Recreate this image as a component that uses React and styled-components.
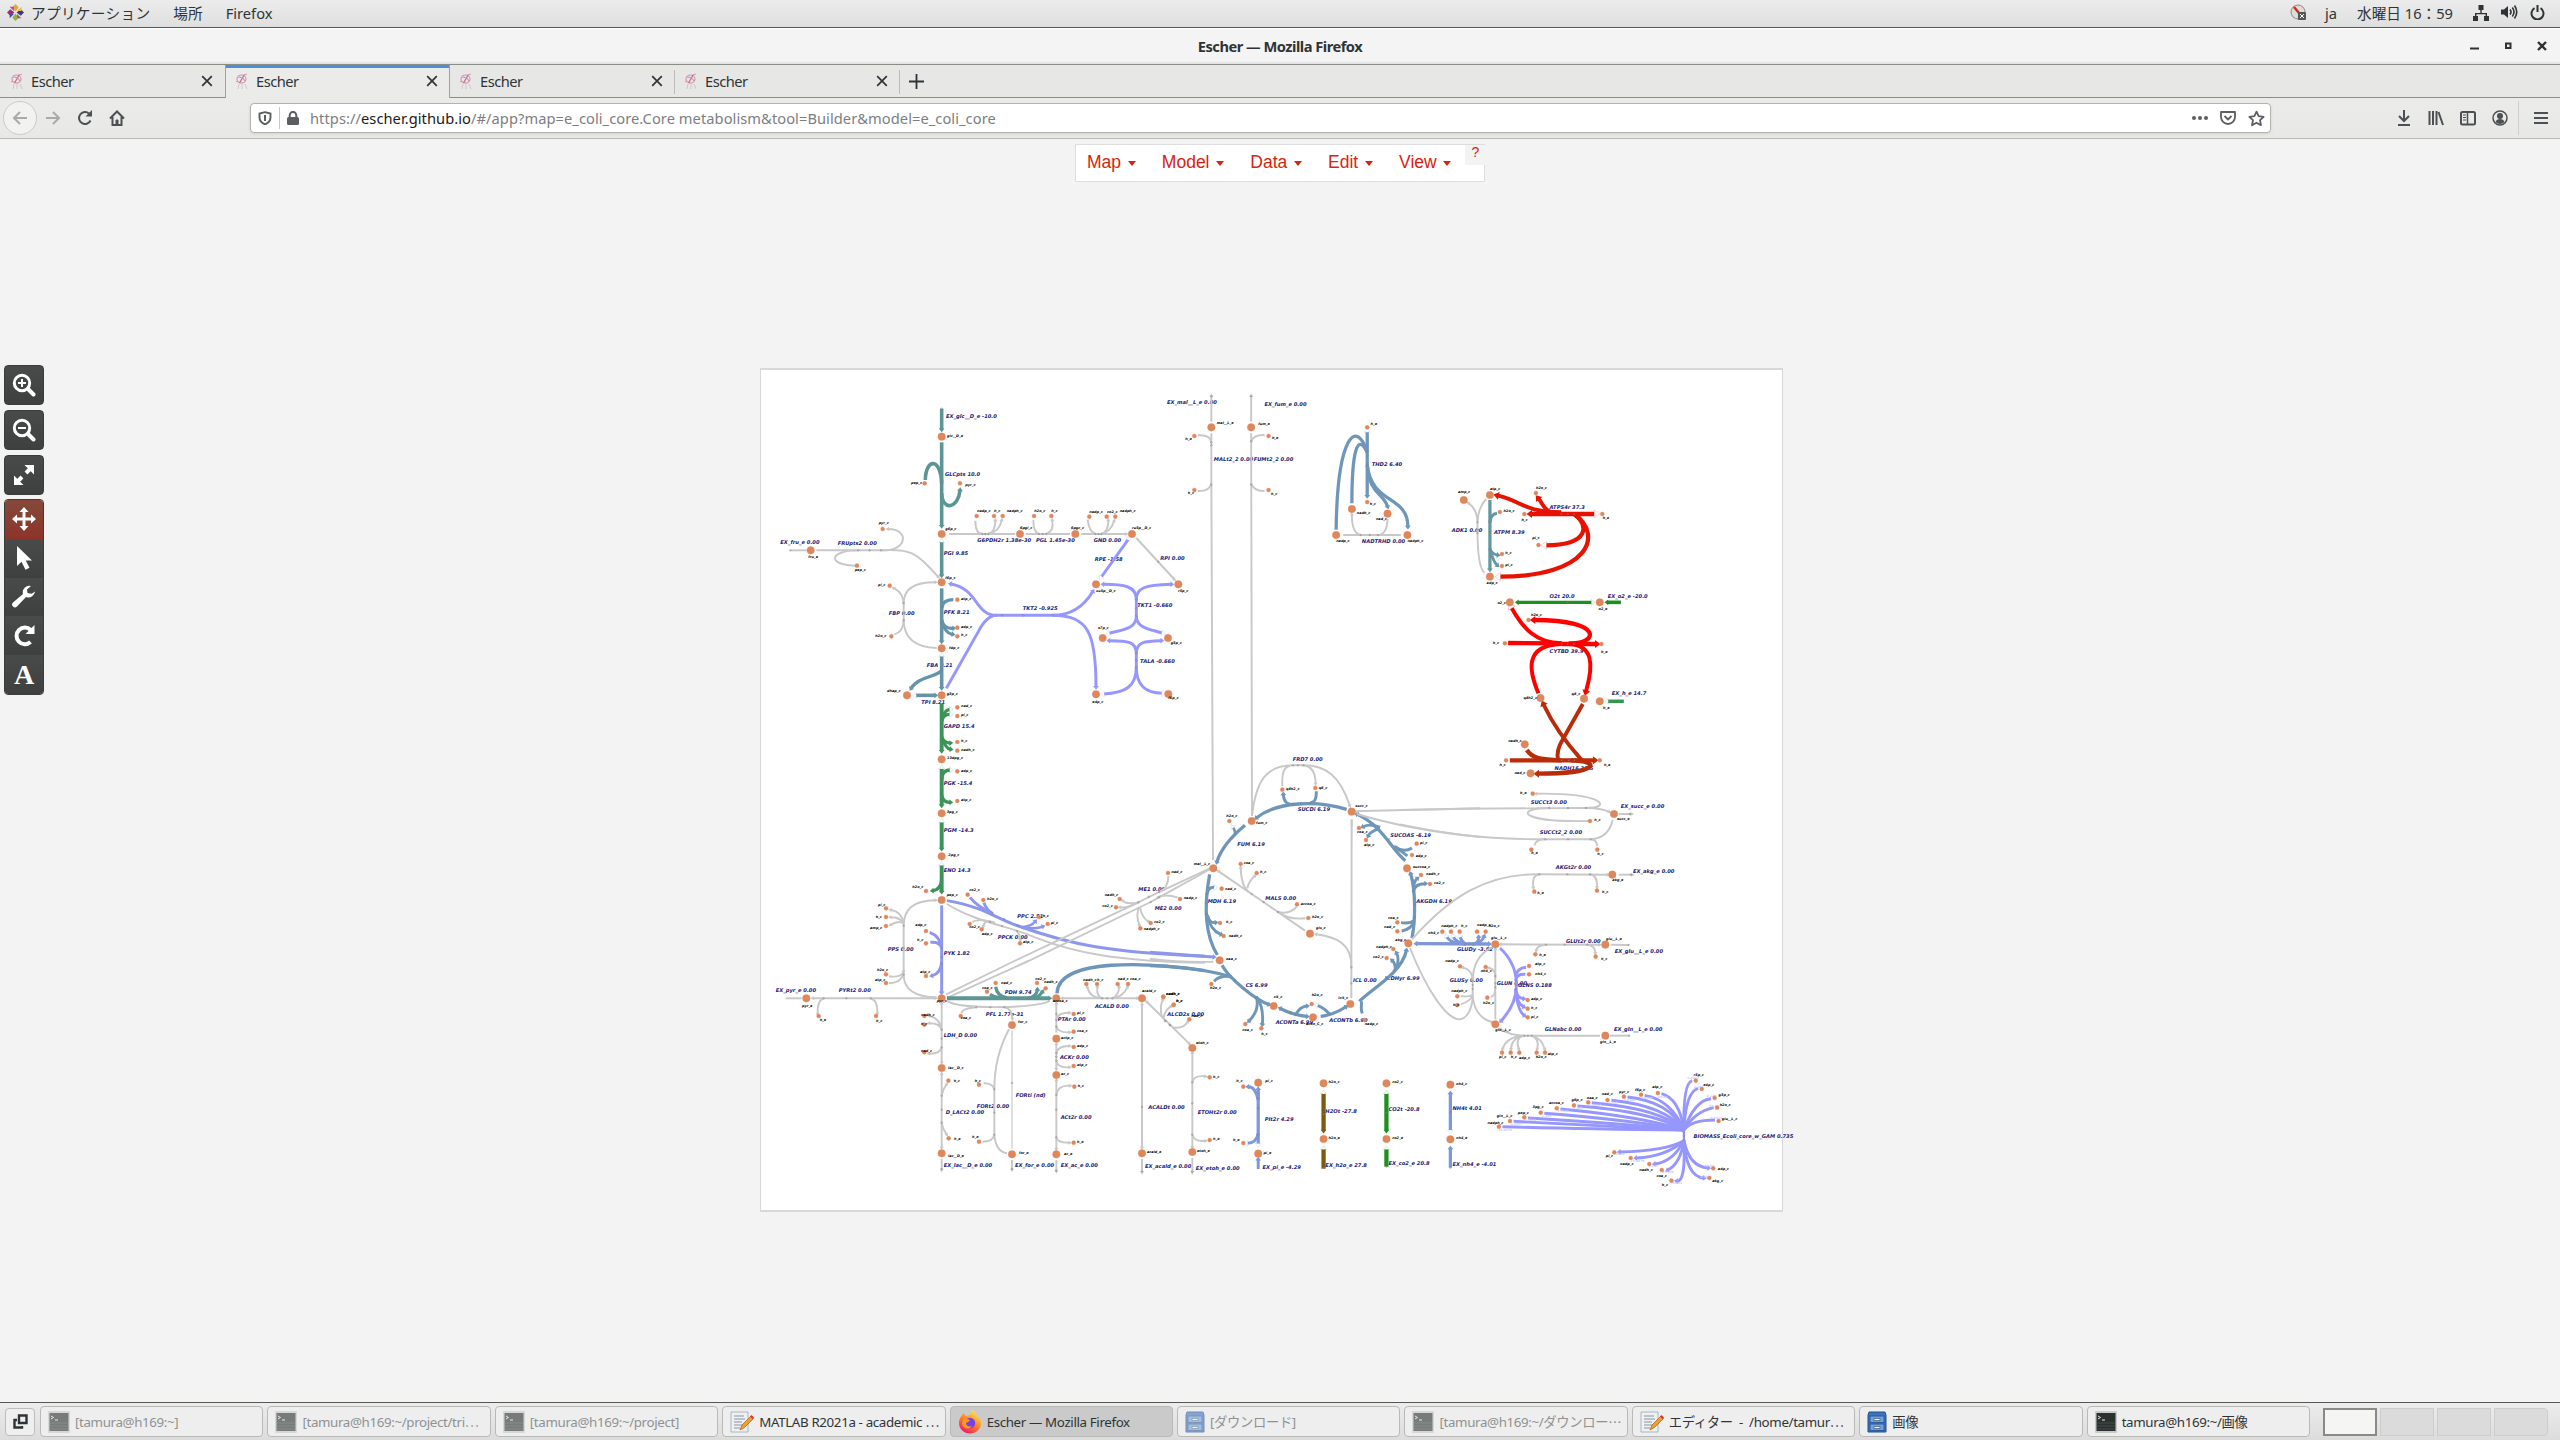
import React from 'react';
import styled, { createGlobalStyle, css } from 'styled-components';

const ui = '"Noto Sans", "Noto Sans CJK JP", sans-serif';

const Global = createGlobalStyle`
  html, body { margin: 0; padding: 0; }
  body { width: 2560px; height: 1440px; overflow: hidden; background: #f3f3f3; font-family: ${ui}; }
  * { box-sizing: border-box; }
  svg { display: block; flex: none; }
`;

/* ---------- desktop chrome ---------- */
const Desktop = styled.div`display: flex; flex-direction: column; width: 2560px; height: 1440px; color: #2e3436;`;
const TopPanel = styled.header`
  display: flex; align-items: center; height: 28px; padding: 0 15px 2px 7px;
  background: linear-gradient(#ececec, #dfdfdf); border-bottom: 1px solid #555753; font-size: 14.67px; white-space: nowrap;
`;
const PanelItem = styled.span`margin-left: ${p => p.$gap || 0}px; letter-spacing: ${p => p.$ls || 0}px;`;
const Spacer = styled.div`flex: 1;`;
const PanelIcon = styled.span`margin-left: ${p => p.$gap || 0}px;`;
const TitleBar = styled.div`
  display: grid; grid-template-columns: 1fr auto 1fr; align-items: center; height: 37px; padding-bottom: 1px;
  background: linear-gradient(#fff 0 1px, #f4f4f4 1px 33px, #dedede 36px); border-bottom: 1px solid #8b8d87;
`;
const Title = styled.div`font-size: 14.67px; font-weight: 700; letter-spacing: -.5px; grid-column: 2; white-space: nowrap;`;
const WindowButtons = styled.div`display: flex; justify-content: flex-end; align-items: center; gap: 21px; padding-right: 13px;`;
const TabStrip = styled.div`display: flex; height: 33px; background: #e7e7e5; box-shadow: inset 0 -1px #8b8d87;`;
const Tab = styled.div`
  display: flex; align-items: center; width: 225px; padding: 0 12px 1px 10px; font-size: 14.67px;
  ${p => p.$active && css`
    background: #ebebe9; border: solid #a0a19c; border-width: 0 1px; box-shadow: inset 0 3px #4a90d9; padding: 0 11px 1px 9px;
  `}
  ${p => p.$line && css`background: linear-gradient(#bdbdb9, #bdbdb9) right 5px / 1px 24px no-repeat; padding-left: 9px;`}
`;
const TabLabel = styled.span`flex: 1; margin-left: 7px; letter-spacing: -.5px;`;
const NewTab = styled.div`display: flex; align-items: center; margin-left: 9px;`;
const NavBar = styled.div`
  display: flex; align-items: center; height: 41px; padding: 0 11px 0 3px;
  background: linear-gradient(#ebebe9, #e8e8e6); border-bottom: 1px solid #b8b8b4; color: #4c5052;
`;
const BackButton = styled.div`
  display: grid; place-items: center; width: 34px; height: 34px; border: 1px solid #cbcbc8; border-radius: 50%; background: #f2f2f1;
`;
const NavIcon = styled.div`display: grid; place-items: center; width: ${p => p.$w || 32}px; height: 32px;`;
const UrlBar = styled.div`
  display: flex; align-items: center; width: 2021px; height: 30px; margin-left: 117px; padding: 0 0 0 4px;
  background: #fff; border: 1px solid #b3b3ab; border-radius: 4px; box-shadow: 0 1px 3px rgba(0,0,0,.1); color: #5c5e5f;
`;
const UrlDivider = styled.i`width: 1px; height: 22px; margin-left: 4px; background: #c9c9c9;`;
const UrlText = styled.div`flex: 1; margin-left: 4px; padding-bottom: 1px; font-size: 14.67px; color: #7d7e7f; letter-spacing: .06px; b { font-weight: 400; color: #1a1a1a; }`;
const NavRight = styled.div`display: flex; align-items: center; margin-left: auto;`;
const MenuButton = styled.div`display: grid; place-items: center; width: 44px; height: 34px; margin: 0 -13px 0 2px; border-left: 1px solid #cfcfcc;`;

/* ---------- web page ---------- */
const Page = styled.main`height: 1263px; background: #f3f3f3; overflow: hidden;`;
const MenuBar = styled.nav`
  display: flex; width: 410px; height: 38px; margin: 5px auto 0; padding-left: 11px;
  background: #fff; border: 1px solid #ddd; color: #d9230f; font: 17.5px "Liberation Sans", Arial, sans-serif;
`;
const MenuItem = styled.div`display: flex; flex: none; align-items: center; margin-right: 26.3px; padding-bottom: 1px; white-space: nowrap;`;
const Caret = styled.i`margin: 2px 0 0 6.500px; border: solid transparent; border-width: 5px 4.500px 0; border-top-color: #d9230f;`;
const Help = styled.div`
  flex: none; width: 20px; height: 20px; margin-left: -12px; background: #f3f3f3; text-align: center; font-size: 14px; line-height: 15px;
`;
const Workspace = styled.div`display: flex; align-items: flex-start;`;
const Tools = styled.aside`display: flex; flex-direction: column; gap: 5px; margin: 183px 0 0 4px;`;
const ToolButton = styled.div`
  display: grid; place-items: center; width: 40px; height: 40px; border: 1px solid #393c3b; border-radius: 4px;
  background: linear-gradient(#484b4a, #3d403f);
`;
const ToolGroup = styled.div`
  display: flex; flex-direction: column; width: 40px; height: 196px; margin-top: -1px; border: 1px solid #3a3d3c; border-radius: 4px; overflow: hidden;
`;
const Tool = styled.div`
  display: grid; place-items: center; flex: 1;
  background: ${p => (p.$active ? 'linear-gradient(#84493b, #8d3429)' : 'linear-gradient(#484b4a, #3d403f)')};
`;
const ToolText = styled.span`color: #fff; font: 700 28px/30px "Liberation Serif", serif; `;
const Canvas = styled.section`
  width: 1023px; height: 844px; margin: 186px 0 0 716px; background: #fff; border: solid #d8d8d8; border-width: 2px 1px;
`;
const MapSvg = styled.svg`width: 1021px; height: 840px; overflow: visible;`;
const RxnLabel = styled.text`font: italic 700 5.180px "DejaVu Sans", sans-serif; fill: #202078; text-rendering: geometricPrecision;`;
const MetLabel = styled.text`font: italic 700 3.450px "DejaVu Sans", sans-serif; fill: #000; text-rendering: geometricPrecision;`;
const Coef = styled.text`font: italic 700 3px "DejaVu Sans", sans-serif; fill: #c9c9ff; text-rendering: geometricPrecision;`;
const Metabolite = styled.circle`fill: #e0865b; stroke: #d8875f; stroke-width: .3px;`;

/* ---------- taskbar ---------- */
const TaskBar = styled.footer`
  display: flex; align-items: center; height: 38px; padding: 0 12px 0 5px; border-top: 1px solid #555753;
  background: linear-gradient(#ececec, #dcdcdc);
`;
const ShowDesktop = styled.div`
  display: grid; place-items: center; width: 30px; height: 28px; margin-right: 5px; border: 1px solid #bdbdbb; border-radius: 4px; background: #efefef;
`;
const Tasks = styled.div`display: flex; gap: 4px; width: 2270px;`;
const Task = styled.div`
  display: flex; align-items: center; flex: 1 1 0; min-width: 0; height: 31px; padding-left: 7px; border: 1px solid #b9b9b7; border-radius: 4px;
  background: ${p => (p.$active ? '#cacaca' : '#eeeeee')}; color: ${p => (p.$dim ? '#8f9292' : '#2e3436')}; font-size: 13.33px; white-space: nowrap;
  svg { opacity: ${p => (p.$dim ? 0.6 : 1)}; }
`;
const TaskText = styled.span`margin-left: 5px; letter-spacing: -.36px; em { font: inherit; font-family: "Noto Sans CJK JP", sans-serif; }`;
const Workspaces = styled.div`display: flex; gap: 3px; margin-left: auto; height: 28px;`;
const WorkspaceCell = styled.div`
  width: 54px; background: ${p => (p.$active ? '#f5f5f3' : '#dbdbdb')}; border: ${p => (p.$active ? '2px solid #888a85' : '1px solid #cdcdcd')};
  border-radius: ${p => (p.$last ? '0 4px 4px 0' : 0)};
`;

/* ---------- metabolic map data ---------- */
const COLORS = {
  g: '#c8c8c8', f: '#dedede', t: '#5b9694', u: '#6594a8', p: '#9696ff', b: '#6e96b9', n: '#3b9457',
  d: '#1f9020', w: '#7c5a12', r: '#e81202', R: '#ff0000', k: '#b92c0a', v: '#7e97d8', x: '#8c96ec', a: '#6298a3',
};

const TILES = [
  {
    at: [755, 365, 3, 3],
    labels: `573,153 EX_glc__D_e -10.0
570,327 GLCpts 10.0
76,531 EX_fru_e 0.00
248,534 FRUpts2 0.00
566,564 PGI 9.85
667,527 G6PDH2r 1.38e-30
843,525 PGL 1.45e-30
1016,525 GND 0.00
1019,582 RPE -1.58
1216,579 RPI 0.00
401,744 FBP 0.00
566,741 PFK 8.21
515,900 FBA 8.21
499,1011 TPI 8.21
803,729 TKT2 -0.925
1147,720 TKT1 -0.660
1155,888 TALA -0.660`,
    mets: `560,215 P glc__D_e 576,212
509,355 s pep_c 468,355
615,355 s pyr_c 631,361
560,507 P g6p_c 571,491
665,453 s nadp_c 666,438
717,453 s h_c 717,438
743,453 s nadph_c 755,438
795,507 P 6pgl_c 795,490
837,453 s h2o_c 838,438
889,453 s h_c 889,438
961,507 P 6pgc_c 948,490
1003,455 s nadp_c 1003,441
1055,455 s co2_c 1056,441
1081,455 s nadph_c 1094,439
1131,507 P ru5p__D_c 1131,489
383,492 s pyr_c 371,474
167,556 P fru_e 160,576
306,602 s pep_c 299,615
560,652 P f6p_c 571,638
404,662 s pi_c 369,660
607,704 s atp_c 618,703
607,788 s adp_c 618,786
607,814 s h_c 618,810
409,814 s h2o_c 361,814
560,850 P fdp_c 582,849
456,991 P dhap_c 396,977
560,991 P g3p_c 575,987
1023,658 P xu5p__D_c 1023,679
1270,658 P r5p_c 1269,679
1043,819 P s7p_c 1029,790
1239,819 P g3p_c 1247,834
1023,988 P e4p_c 1012,1011
1240,987 P f6p_c 1240,999`,
    dots: '560,131 560,355 560,372 560,391 560,570 106,556 310,556 344,556 378,556 446,714 446,744 446,766 682,507 691,507 700,507 852,507 863,507 874,507 1021,507 1030,507 1039,507 1210,590 742,751 805,751 893,751 1144,704 1144,730 1144,752 1144,865 1144,886 1144,907 560,726 560,773 560,912 560,886 508,991',
    paths: `t 10 > M560,131 L560,192
t 10 > M560,232 L560,482
t 10 - M511,345 C512,280 557,276 560,355
t 10 > M560,385 C562,440 610,430 615,376
t 10 (> M560,530 L560,630
g 5 - M582,507 L780,507
g 5 - M812,507 L945,507
g 5 > M979,507 L1112,507
g 5 - M661,467 Q661,505 682,507
g 5 > M700,507 Q721,500 721,467
g 5 > M700,507 Q733,500 740,467
g 5 - M835,464 Q834,500 852,507
g 5 > M874,507 Q897,500 892,467
g 5 - M998,464 Q1002,500 1021,507
g 5 > M1039,507 Q1060,500 1060,467
g 5 > M1039,507 Q1068,500 1077,469
g 5 - M106,556 L155,556
g 5 > M184,556 L380,556 C470,552 480,560 549,635
g 5 - M306,602 C215,602 220,556 310,556
g 5 > M378,556 C460,560 463,492 400,492
u 10 > M560,670 L560,828
u 9 - M595,704 Q563,704 560,730
u 9 > M560,765 Q566,792 594,790
u 9 > M560,765 Q568,804 592,808
g 5 - M545,849 Q446,845 446,764 L446,714
g 5 > M446,714 Q446,652 540,652
g 5 > M446,720 Q446,685 418,670
g 5 - M418,808 Q446,800 446,764
u 10 (> M560,873 L560,968
u 9 > M560,917 C545,935 490,935 469,969
u 10 (> M482,991 L540,991
p 8 () M1120,523 L1039,636
g 5 > M1144,519 L1257,642
p 8 <- M588,657 C670,672 660,751 725,751 L893,751
p 8 - M574,970 L670,800 Q695,751 725,751
p 8 > M893,751 Q970,751 1013,680
p 8 > M893,751 C1000,751 1023,805 1023,965
p 8 < M1046,658 C1105,658 1144,662 1144,704 L1144,752
p 8 > M1144,704 C1144,668 1170,660 1248,658
p 8 ) M1144,752 C1144,792 1105,793 1062,805
p 8 ) M1144,752 C1144,790 1185,792 1222,804
p 8 < M1064,827 C1120,827 1143,830 1144,865 L1144,907
p 8 > M1144,865 C1144,830 1170,828 1218,827
p 8 ) M1144,907 C1144,965 1110,984 1046,987
p 8 ) M1144,907 C1144,960 1170,984 1222,985`,
  },
  {
    at: [1150, 365, 2.4123, 3],
    labels: `41,111 EX_mal__L_e 0.00
276,117 EX_fum_e 0.00
154,282 MALt2_2 0.00
250,282 FUMt2_2 0.00
535,297 THD2 6.40
511,528 NADTRHD 0.00
728,495 ADK1 0.00
830,501 ATPM 8.39
964,426 ATPS4r 37.3
964,693 O2t 20.0
1104,693 EX_o2_e -20.0
964,858 CYTBD 39.9
1114,984 EX_h_e 14.7
976,1209 NADH16 33.5`,
    mets: `148,187 P mal__L_e 161,173
107,213 s h_e 85,221
107,375 s h_c 91,385
244,187 P fum_e 261,176
286,213 s h_e 294,218
286,375 s h_c 292,386
524,187 s h_e 532,176
524,411 s h_c 530,416
487,432 P nadh_c 499,443
573,446 P nad_c 545,461
449,510 P nadp_c 449,527
621,510 P nadph_c 621,527
757,405 P amp_c 743,380
820,390 P atp_c 820,371
844,441 s h2o_c 853,437
849,567 s h_c 857,564
849,603 s pi_c 857,600
820,635 P adp_c 812,654
931,384 s h2o_c 931,370
903,447 s h_c 896,464
1091,447 s h_e 1092,458
937,540 s pi_c 922,519
868,712 P o2_c 838,715
1085,712 P o2_e 1082,731
913,765 s h2o_c 919,749
856,835 s h_c 827,835
1089,837 s h_e 1088,860
942,999 P q8h2_c 901,999
1047,1001 P q8_c 1017,987
1085,1009 P h_e 1093,1028
904,1138 P nadh_c 864,1128
859,1186 s h_c 843,1199
1085,1186 s h_e 1095,1199
918,1225 P nad_c 879,1224`,
    dots: '148,94 244,94 148,232 148,241 148,359 244,229 244,359 524,261 524,272 524,300 508,510 530,510 550,510 790,472 790,495 790,505 820,472 820,501 820,552 992,447 1008,447 1023,447 1008,712 993,837 1007,837 1022,837 993,1186 1010,1186 1024,1186',
    paths: `g 5 > M148,170 L148,94
g 5 > M244,170 L244,94
g 5 - M148,205 L148,359 L152,1485
g 5 - M244,205 L246,1350
g 5 ) M148,232 Q146,208 114,211
g 5 ) M148,355 Q144,380 114,378
g 5 ) M244,229 Q250,208 278,210
g 5 ) M244,355 Q250,380 278,378
b 9 (> M524,200 L524,392
b 9 - M449,494 C452,210 498,160 524,262
b 9 - M487,415 C487,260 500,200 524,262
b 9 > M524,300 C530,390 560,380 573,424
b 9 > M524,300 C535,420 622,390 622,484
g 5 - M605,510 L466,510
g 5 < M487,450 Q487,505 508,510
g 5 - M573,462 Q572,508 550,510
g 5 < M769,415 Q790,435 790,472 L790,500
g 5 ) M790,495 Q790,610 808,625
g 5 - M811,402 Q792,425 790,470
a 9 > M820,405 L820,612
a 8 - M837,445 Q822,447 820,472
a 8 > M820,552 Q826,568 838,570
a 8 > M820,552 Q828,590 837,600
r 12 <) M920,447 L1073,447
r 11 > M992,442 C900,440 900,410 840,392
r 11 > M992,446 C950,445 950,420 938,402
r 12 ) M1023,447 C1060,480 1060,541 955,541
r 12 ) M1023,447 C1095,510 1060,635 844,635
d 9 <) M888,712 L1066,712
d 10 < M1104,712 L1136,712
R 12 - M864,834 L993,835
R 12 > M993,837 L1075,837
R 11 ( M872,728 C900,790 930,833 993,835
R 12 > M1010,835 C1080,840 1100,765 928,765
R 11 - M993,837 C900,840 915,920 937,985
R 11 > M1010,837 C1070,840 1070,900 1052,978
n 10 ( M1104,1009 L1143,1009
k 12 > M868,1186 L1070,1186
k 11 - M1044,1017 L995,1125 Q980,1155 984,1184
k 11 > M1042,1186 Q980,1100 950,1020
k 12 - M909,1155 C925,1185 950,1183 993,1186
k 12 > M1015,1186 C1090,1188 1085,1226 937,1226`,
  },
  {
    at: [755, 700, 3, 3],
    labels: `566,78 GAPD 15.4
566,249 PGK -15.4
566,390 PGM -14.3
566,510 ENO 14.3
787,648 PPC 2.51
728,711 PPCK 0.00
398,747 PPS 0.00
566,759 PYK 1.82
1150,567 ME1 0.00
1199,624 ME2 0.00
62,870 EX_pyr_e 0.00
251,870 PYRt2 0.00
749,876 PDH 9.74`,
    mets: `607,22 s nad_c 618,18
607,48 s pi_c 618,45
607,126 s h_c 618,123
607,152 s nadh_c 618,150
560,178 P 13dpg_c 576,174
607,214 s adp_c 618,213
607,303 s atp_c 618,300
560,340 P 3pg_c 575,336
560,469 P 2pg_c 580,465
513,573 s h2o_c 472,561
560,600 P pep_c 575,585
638,584 s co2_c 643,570
685,600 s h2o_c 696,597
852,651 s h_c 863,648
878,672 s pi_c 887,669
393,625 s pi_c 369,615
393,651 s h_c 362,651
393,678 s amp_c 345,684
513,693 s adp_c 481,675
513,730 s h_c 486,720
513,828 s atp_c 495,816
644,672 s co2_c 643,681
680,688 s adp_c 680,702
795,730 s atp_c 804,726
393,823 s h2o_c 366,810
393,849 s atp_c 360,841
1239,519 s nad_c 1249,516
1275,597 s nadp_c 1286,594
1094,597 s nadh_c 1049,584
1083,622 s co2_c 1042,618
1187,669 s co2_c 1197,666
1156,685 s nadph_c 1166,687
722,849 s nad_c 738,849
696,875 s coa_c 681,864
846,849 s co2_c 841,837
872,865 s nadh_c 867,847
154,895 P pyr_e 141,917
560,895 P pyr_c 545,903
904,895 P accoa_c 893,902
1161,895 P acald_c 1161,873
994,852 s nadh_c 984,840
1026,852 s h_c 1026,840
1088,852 s nad_c 1088,837
1119,852 s coa_c 1125,837
1225,890 s nadh_c 1233,882`,
    dots: '560,63 560,78 560,112 560,229 560,260 560,291 560,404 560,541 446,677 446,744 446,824 560,744 560,771 560,792 713,641 747,657 788,676 705,666 741,678 786,693 1150,607 1181,590 1212,576 1187,606 1212,592 206,895 274,895 347,895 755,895 789,895 820,895 1042,895 1057,895 1072,895 664,922 706,922 748,922',
    paths: `n 11 > M560,10 L560,152
n 9 ) M560,63 Q566,30 585,28
n 9 ) M560,63 Q566,42 585,43
n 9 > M560,112 Q570,130 585,129
n 9 > M560,112 Q572,146 586,148
n 11 (> M560,205 L560,315
n 9 ) M560,240 Q560,210 586,210
n 9 > M560,285 Q564,308 585,307
n 11 (> M560,366 L560,445
n 11 (> M560,495 L560,574
n 9 > M560,541 Q556,570 534,572
x 8 > M560,616 L560,876
x 8 - M576,602 C690,622 720,655 790,678 C950,735 1060,757 1350,769
g 5 - M576,612 C660,665 760,678 840,712 C950,755 1080,785 1350,788
x 8 - M645,592 Q665,618 713,641
x 8 - M687,608 Q692,628 713,641
x 7 > M800,682 Q830,678 840,665
x 7 > M800,683 Q840,688 862,680
g 5 ) M705,664 Q665,655 650,668
g 5 > M720,668 Q690,655 685,678
g 5 > M786,693 Q796,706 796,718
g 5 > M545,892 Q446,890 446,824 L446,677 Q446,602 540,601
g 5 > M446,670 Q440,635 408,630
g 5 > M446,670 Q435,652 408,652
g 5 > M446,670 Q430,660 408,674
g 5 - M402,829 Q444,834 446,810
g 5 - M402,849 Q444,850 446,810
x 8 - M524,697 Q555,708 560,744
x 8 - M526,727 Q555,724 560,744
x 8 > M560,785 Q558,820 532,827
g 5 - M1372,502 L1350,512 L1212,576 L1150,607 L778,783 L574,883
g 5 - M1372,504 L1350,516 L1212,592 L1187,606 L820,783 L578,893
g 5 - M1240,528 Q1240,565 1212,576
g 5 > M1150,607 Q1115,614 1104,603
g 5 > M1150,607 Q1115,625 1096,622
g 5 - M1268,592 Q1225,580 1205,594
g 5 > M1155,622 Q1162,655 1180,664
g 5 > M1152,622 Q1142,645 1153,675
g 5 - M92,895 L140,895
g 5 <> M175,895 L540,895
t 11 > M576,895 L882,895
t 9 - M722,860 Q726,888 755,893
t 9 - M705,883 Q725,895 755,895
t 9 > M820,895 Q846,888 847,870
t 9 > M820,895 Q850,895 862,876
b 9 - M906,880 C910,770 1190,788 1350,812
g 5 - M576,902 C610,930 850,925 884,903
g 5 <> M923,895 L1145,895
g 5 < M997,862 Q1005,895 1042,895
g 5 < M1027,862 Q1024,890 1042,895
g 5 > M1072,895 Q1092,885 1092,862
g 5 > M1072,895 Q1105,890 1117,862
g 5 > M206,895 Q187,900 188,940
g 5 > M347,895 Q368,900 367,940`,
  },
  {
    at: [1150, 740, 3, 3],
    labels: `428,57 FRD7 0.00
443,207 SUCDi 6.19
262,312 FUM 6.19
721,285 SUCOAS -6.19
173,483 MDH 6.19
346,474 MALS 0.00
799,483 AKGDH 6.19
609,720 ICL 0.00
704,715 ICDHyr 6.99
287,735 CS 6.99
377,846 ACONTa 6.99
538,840 ACONTb 6.99
52,822 ALCD2x 0.00`,
    mets: `397,149 s q8h2_c 408,147
496,144 s q8_c 506,144
605,215 P succ_c 616,198
305,243 P fum_c 318,248
238,243 s h2o_c 229,228
627,264 s coa_c 621,276
648,300 s atp_c 642,314
800,311 s pi_c 810,309
786,345 s adp_c 797,348
771,385 P succoa_c 789,381
190,385 P mal__L_c 131,372
272,372 s coa_c 281,370
320,399 s h_c 330,396
813,405 s nadh_c 828,402
840,432 s co2_c 852,429
215,446 s nad_c 225,446
441,493 s accoa_c 452,492
475,534 s h2o_c 486,532
480,581 P glx_c 498,565
210,549 s h_c 228,546
221,588 s nadh_c 236,588
742,547 s coa_c 714,535
742,574 s nad_c 702,561
775,610 P akg_c 736,600
730,627 s nadph_c 678,621
710,654 s co2_c 669,651
209,661 P oaa_c 228,657
184,732 s h2o_c 180,744
286,852 s coa_c 277,870
334,865 s h_c 334,882
371,798 P cit_c 371,771
485,792 s h2o_c 485,765
489,832 P acon_C_c 468,852
601,792 P icit_c 565,773
644,840 s nadp_c 644,852
40,771 s nadh_c 48,763
71,795 s h_c 79,783
118,838 s nad_c 124,828`,
    dots: '429,76 444,76 460,76 429,192 454,190 481,188 247,295 223,325 718,297 734,318 749,330 168,462 168,490 168,522 305,462 341,486 384,516 790,456 794,493 793,534 604,682 604,730 711,714 731,690 753,669 255,720 282,745 319,775 421,819 436,825 540,822 44,843 60,856',
    paths: `g 5 > M306,228 C318,120 350,76 429,76 L460,76 C530,76 570,110 599,196
g 5 - M397,138 Q394,80 420,78
g 5 > M460,76 Q496,80 497,130
b 9 > M590,208 C500,180 380,185 320,233
b 8 > M429,193 Q402,195 400,164
b 8 - M481,188 Q500,188 499,154
b 9 < M201,365 C215,320 250,285 285,256
b 7 ( M249,262 Q258,275 254,288
b 9 < M622,223 C700,260 725,330 766,362
b 8 > M690,262 Q660,250 640,260
b 8 > M690,265 Q660,275 655,287
b 8 - M735,320 Q760,340 786,324
b 8 - M735,320 Q765,342 772,348
b 9 - M179,403 Q150,560 202,645
b 8 ) M172,460 Q175,440 194,442
b 8 > M172,525 Q178,550 196,548
b 8 > M172,525 Q180,570 212,583
g 5 - M465,572 L384,516 L305,462
g 5 > M305,462 L206,394
g 5 > M300,458 Q275,445 272,385
g 5 > M292,445 Q295,425 314,408
g 5 - M384,516 Q420,524 440,500
g 5 - M384,516 Q415,540 466,535
g 5 - M604,775 L605,236
g 5 > M604,682 C606,610 560,592 500,583
g 5 ) M605,260 L605,236
b 9 < M782,402 C797,450 797,540 786,594
b 8 > M790,456 Q790,425 801,416
b 8 > M790,456 Q792,432 825,431
b 8 - M753,548 Q780,552 792,542
b 8 - M755,573 Q785,568 792,542
b 9 > M628,784 C660,750 755,700 769,632
b 8 > M740,685 Q748,655 740,640
b 8 > M736,688 Q736,670 727,662
b 8 - M635,784 Q632,810 637,820
b 9 > M216,676 C240,720 320,780 355,793
b 9 - M0,677 C110,680 200,695 245,712
b 8 - M192,724 Q210,705 245,710
b 8 > M319,770 Q330,810 298,842
b 8 > M319,770 Q342,800 337,852
x 8 > M0,637 L190,651
g 5 - M0,656 Q100,668 190,665
b 9 <> M392,806 Q430,825 470,829
b 8 > M436,825 Q450,800 470,798
b 9 > M512,829 Q550,825 587,801
b 8 ( M502,796 Q525,805 538,822
g 5 - M606,214 L990,205
g 5 - M620,222 Q780,270 990,291
g 5 - M780,624 C830,750 890,840 930,838 C955,834 968,800 968,765
g 5 > M36,832 Q28,800 38,780
g 5 > M40,838 Q44,810 62,800
g 5 > M66,862 Q100,868 112,847`,
  },
  {
    at: [1400, 740, 3, 3],
    labels: `392,186 SUCCt3 0.00
662,198 EX_succ_e 0.00
419,276 SUCCt2_2 0.00
467,381 AKGt2r 0.00
699,393 EX_akg_e 0.00
171,627 GLUDy -3.82
498,603 GLUt2r 0.00
644,633 EX_glu__L_e 0.00
149,720 GLUSy 0.00
290,729 GLUN 0.00
354,735 GLNS 0.188
434,867 GLNabc 0.00
642,867 EX_gln__L_e 0.00`,
    mets: `398,161 s h_e 360,159
570,243 s h_c 583,240
642,222 P succ_e 651,237
394,329 s h_e 394,339
592,329 s h_c 592,342
637,404 P akg_e 637,420
403,455 s h_e 412,459
591,452 s h_c 606,456
127,575 s nh4_c 84,578
153,575 s nadph_c 124,557
179,575 s h_c 183,557
231,575 s nadp_c 231,555
257,575 s h2o_c 266,557
286,613 P glu__L_c 273,594
616,614 P glu__L_e 618,597
406,643 s h_e 418,644
587,650 s h_c 603,657
180,679 s nadp_c 136,663
257,681 s nh4_c 242,693
387,678 s atp_c 405,672
387,703 s nh4_c 405,702
172,769 s nadph_c 154,752
172,795 s h_c 159,795
262,773 s h2o_c 249,789
383,780 s adp_c 393,777
383,806 s h_c 393,804
383,832 s pi_c 393,832
286,853 P gln__L_c 286,870
616,887 P gln__L_e 600,906
306,938 s pi_c 297,951
332,938 s h_c 332,951
358,938 s adp_c 357,954
410,938 s h2o_c 407,951
435,938 s atp_c 443,942`,
    dots: '448,204 504,204 558,204 690,222 436,298 504,298 572,298 418,403 502,403 570,403 693,404 197,613 208,613 218,613 438,614 494,614 562,614 686,615 218,723 218,735 218,747 286,708 286,730 286,741 347,722 347,735 347,747 373,887 384,887 395,887 688,887',
    paths: `g 5 > M0,210 L200,206 L558,204 Q605,204 626,215
g 5 < M410,161 C610,158 640,204 558,204
g 5 - M570,243 C350,248 345,204 448,204
g 5 > M656,222 L693,222
g 5 - M0,253 C200,295 320,298 436,298 L572,298 Q625,295 638,240
g 5 ) M436,298 Q405,298 403,318
g 5 ) M572,298 Q590,298 592,320
g 5 > M36,598 C150,470 260,400 418,403 L622,404
g 5 > M418,403 Q395,405 400,442
g 5 > M570,403 Q592,405 591,440
g 5 > M656,404 L695,404
v 9 <> M50,611 L266,612
v 8 ) M197,613 Q150,610 140,590
v 8 ) M197,613 Q165,605 160,590
v 8 ) M197,613 Q185,605 180,590
v 8 > M218,613 Q237,608 236,592
v 8 > M218,613 Q245,608 252,590
g 5 <> M303,613 L597,614
g 5 - M632,614 L687,615
g 5 > M438,614 Q412,615 409,630
g 5 > M562,614 Q586,618 586,638
g 5 > M276,622 Q218,650 218,723 L218,760 Q220,830 275,846
g 5 > M218,723 Q218,690 190,683
g 5 - M218,765 Q210,770 182,769
g 5 - M218,765 Q210,785 182,793
g 5 <- M286,628 L286,838
g 5 > M286,715 Q288,688 268,684
g 5 - M286,741 Q286,770 272,770
p 8 > M300,624 C360,680 370,770 304,842
p 8 - M378,682 Q350,685 347,710
p 8 - M376,703 Q350,700 347,722
p 8 > M347,747 Q350,775 370,776
p 8 > M347,747 Q350,790 370,800
p 8 > M347,755 Q355,815 372,826
g 5 < M302,868 Q335,887 373,887 L600,887
g 5 - M630,887 L688,887
g 5 > M370,887 Q320,890 308,926
g 5 > M370,887 Q335,895 333,926
g 5 > M370,887 Q345,895 356,926
g 5 > M395,887 Q418,895 412,926
g 5 > M395,887 Q425,895 434,926`,
  },
  {
    at: [755, 960, 3, 3],
    labels: `692,162 PFL 1.77e-31
908,177 PTAr 0.00
1020,138 ACALD 0.00
566,225 LDH_D 0.00
915,291 ACKr 0.00
782,405 FORti (nd)
665,438 FORt2 0.00
572,456 D_LACt2 0.00
917,471 ACt2r 0.00
1180,441 ACALDt 0.00
1328,456 ETOHt2r 0.00
566,615 EX_lac__D_e 0.00
780,615 EX_for_e 0.00
917,615 EX_ac_e 0.00
1170,618 EX_acald_e 0.00
1322,624 EX_etoh_e 0.00`,
    mets: `191,168 s h_e 194,180
363,168 s h_c 363,183
508,168 s nadh_c 498,164
508,194 s h_c 498,192
508,277 s nad_c 498,272
617,168 s coa_c 617,174
771,195 P for_c 789,186
956,162 s pi_c 966,159
956,215 s coa_c 966,213
904,236 P actp_c 918,234
956,261 s adp_c 966,258
956,318 s atp_c 966,315
904,345 P ac_c 918,342
560,324 P lac__D_c 579,324
580,362 s h_c 596,363
672,374 s h_c 659,363
958,380 s h_c 968,378
581,535 s h_e 597,537
672,545 s h_e 651,531
956,548 s h_e 966,546
560,580 P lac__D_e 579,587
771,583 P for_e 792,579
904,583 P ac_e 927,583
1161,580 P acald_e 1176,576
1256,134 s h_c 1263,122
1312,264 P etoh_c 1323,248
1364,352 s h_c 1374,351
1364,540 s h_e 1374,537
1312,576 P etoh_e 1326,573
1465,380 s h_c 1444,363
1465,549 s h_e 1434,540`,
    dots: '560,209 560,236 560,262 560,407 560,449 560,488 718,388 718,458 718,524 771,369 904,162 904,180 904,200 904,279 904,290 904,302 904,405 904,449 904,532 1161,441 1312,367 1312,430 1312,524 1232,183 1244,194 560,627 771,627 904,632 1161,635 1312,635',
    paths: `g 5 <> M560,132 L560,306
g 5 > M560,209 Q555,175 524,168
g 5 > M560,209 Q555,190 524,190
g 5 > M560,262 Q555,282 524,281
g 5 <> M560,343 L560,562
g 5 > M560,407 Q562,390 574,374
g 5 > M560,488 Q562,505 574,522
g 5 > M560,597 L560,628
g 5 - M664,142 Q622,145 619,160
g 5 > M748,142 Q770,145 772,175
g 5 - M762,208 Q718,290 718,388 L718,524 Q722,575 756,580
g 5 ) M718,388 Q712,368 684,370
g 5 - M718,524 Q714,546 682,545
f 5 - M771,212 L771,566
g 5 > M771,600 L771,628
g 5 < M904,132 L904,218
g 5 > M904,180 Q906,158 942,158
g 5 > M904,198 Q906,218 942,217
g 5 <> M904,254 L904,326
g 5 > M904,282 Q906,258 942,258
g 5 > M904,302 Q906,324 942,322
g 5 <> M904,362 L904,566
g 5 > M904,405 Q908,375 944,377
g 5 > M904,532 Q906,548 942,548
g 5 > M904,600 L904,632
g 5 <> M1161,134 L1161,562
g 5 > M1161,597 L1161,635
g 5 <> M1176,126 L1302,250
g 5 <> M1312,280 L1312,560
g 5 > M1312,367 Q1316,345 1350,349
g 5 > M1312,524 Q1316,545 1350,543
g 5 > M1312,594 L1312,635`,
  },
  {
    at: [1250, 1020, 2.8, 3],
    labels: `41,297 PIt2r 4.29
35,441 EX_pi_e -4.29
211,273 H2Ot -27.8
211,435 EX_h2o_e 27.8
388,267 CO2t -20.8
388,429 EX_co2_e 20.8
567,264 NH4t 4.01
567,432 EX_nh4_e -4.01
1242,348 BIOMASS_Ecoli_core_w_GAM 0.735`,
    mets: `23,188 P pi_c 43,183
23,401 P pi_e 38,399
206,190 P h2o_c 220,185
206,357 P h2o_e 220,353
382,190 P co2_c 398,185
382,357 P co2_e 398,353
561,194 P nh4_c 577,191
561,358 P nh4_e 577,354
697,320 s nadph_c 665,309
728,303 s gln__L_c 691,288
768,292 s pep_c 750,279
814,278 s 3pg_c 791,261
859,265 s accoa_c 837,249
907,256 s g6p_c 900,240
947,247 s oaa_c 943,234
1001,240 s nad_c 985,222
1047,230 s pyr_c 1033,216
1095,224 s f6p_c 1078,210
1142,219 s atp_c 1126,201
1248,182 s r5p_c 1242,164
1265,207 s e4p_c 1269,195
1301,234 s g3p_c 1312,225
1308,263 s h2o_c 1315,255
1312,303 s glu__L_c 1321,297
1020,397 s pi_c 996,408
1066,414 s nadp_c 1036,432
1118,432 s nadh_c 1090,450
1153,450 s coa_c 1138,468
1180,482 s h_c 1153,494
1297,445 s adp_c 1310,446
1286,474 s akg_c 1294,483`,
    coefs: `695,330 13.0279
730,311 0.2557
770,300 0.5191
817,288 1.496
860,272 3.7478
906,264 0.205
950,255 1.7867
1004,249 3.547
1046,240 2.8328
1095,233 0.0709
1142,230 59.81
1224,173 0.8977
1243,202 0.361
1278,228 0.129
1286,259 59.81
1289,295 4.9414
1022,402 59.81
1066,422 13.0279
1116,438 3.547
1154,457 3.7478
1183,490 59.81
1272,437 59.81
1260,470 4.1182`,
    dots: '23,235 23,265 23,344 206,283 382,278 561,276 1215,338 1215,348 1215,359 206,443 382,440 561,443',
    paths: `v 9 (- M23,372 L23,215
v 9 < M23,208 L23,240
v 8 > M23,240 Q15,200 -4,200
v 8 ) M23,340 Q18,370 -8,370
v 8 < M23,420 L23,447
w 12 (> M206,220 L206,331
w 12 (- M206,387 L206,446
d 12 (> M382,220 L382,331
d 12 (- M382,387 L382,440
v 9 <) M561,221 L561,332
v 9 < M561,386 L561,443
p 8 - M707,320 Q900,327 1213,330
p 8 - M738,304 Q1000,318 1214,330
p 8 - M778,294 Q1060,312 1214,330
p 8 - M824,280 Q1080,302 1214,330
p 8 - M869,267 Q1100,290 1214,330
p 8 - M917,258 Q1130,275 1214,330
p 8 - M957,248 Q1150,265 1214,330
p 8 - M1012,241 Q1165,258 1214,330
p 8 - M1057,231 Q1175,245 1215,330
p 8 - M1105,226 Q1180,240 1215,330
p 8 - M1152,221 Q1202,235 1215,330
p 8 - M1238,182 Q1212,190 1215,330
p 8 - M1255,205 Q1220,215 1215,330
p 8 - M1291,236 Q1245,240 1215,330
p 8 - M1298,263 Q1245,275 1215,330
p 8 - M1302,300 Q1235,300 1215,330
p 6 - M1215,330 L1215,365
p 8 > M1215,362 Q1165,392 1036,396
p 8 > M1215,362 Q1165,410 1082,414
p 8 > M1215,362 Q1185,425 1134,432
p 8 > M1215,362 Q1205,430 1170,450
p 8 > M1215,362 Q1220,485 1196,483
p 8 > M1215,362 Q1230,440 1282,444
p 8 > M1215,362 Q1222,470 1270,474`,
  },
];

const lines = s => (s ? s.split('\n') : []);
const parsed = TILES.map(({ at: [ox, oy, sx, sy], labels, mets, coefs, dots, paths }) => {
  const pt = s => { const [x, y] = s.split(',').map(Number); return [+(ox + x / sx).toFixed(2), +(oy + y / sy).toFixed(2)]; };
  const text = l => { const i = l.indexOf(' '); return [...pt(l.slice(0, i)), l.slice(i + 1)]; };
  return {
    labels: lines(labels).map(text),
    coefs: lines(coefs).map(text),
    mets: lines(mets).map(l => { const [p, k, name, q] = l.split(' '); return { p: pt(p), k, name, q: pt(q) }; }),
    dots: dots.split(' ').map(pt),
    paths: lines(paths).map(l => {
      const [c, w, ends, ...d] = l.split(' ');
      return { c, w: (+w + 0.8) / 3, ends, d: d.join(' ').replace(/-?\d+,-?\d+/g, m => pt(m).join(' ')) };
    }),
  };
});

const flat = key => parsed.flatMap(t => t[key]);
const HEAD = { g: [2, 3.6], f: [2, 3.6], r: [4, 5.5], R: [4, 5.5], k: [4, 5.5] };
const pale = c => (c === 'g' ? '#e4e4ea' : COLORS[c]);

function Markers() {
  return (
    <defs>
      {Object.keys(COLORS).map(c => {
        const [h, len] = HEAD[c] || [2.9, 3.8];
        const d = `M0 ${-h} L${len} 0 L0 ${h} Z`;
        const common = { markerUnits: 'userSpaceOnUse', orient: 'auto-start-reverse', overflow: 'visible', refX: 0.6, markerWidth: 8, markerHeight: 8 };
        return (
          <React.Fragment key={c}>
            <marker id={`s-${c}`} {...common}><path d={d} fill={COLORS[c]} /></marker>
            <marker id={`h-${c}`} {...common}><path d={d} fill="#fff" stroke={pale(c)} strokeWidth=".35" strokeOpacity=".55" /></marker>
          </React.Fragment>
        );
      })}
    </defs>
  );
}

function MetabolicMap() {
  return (
    <MapSvg viewBox="761 370 1021 840">
      <Markers />
      {flat('labels').map(([x, y, t], i) => <RxnLabel key={i} x={x} y={y + 1.8}>{t}</RxnLabel>)}
      {flat('paths').map(({ c, w, ends, d }, i) => {
        const start = ends.includes('<') ? 's' : ends.includes('(') ? 'h' : null;
        const end = ends.includes('>') ? 's' : ends.includes(')') ? 'h' : null;
        return (
          <path key={i} d={d} fill="none" stroke={COLORS[c]} strokeWidth={w}
            markerStart={start ? `url(#${start}-${c})` : undefined} markerEnd={end ? `url(#${end}-${c})` : undefined} />
        );
      })}
      {flat('coefs').map(([x, y, t], i) => <Coef key={i} x={x} y={y + 1.1}>{t}</Coef>)}
      {flat('dots').map(([x, y], i) => <circle key={i} cx={x} cy={y} r=".75" fill="#fff" fillOpacity=".35" stroke="#555" strokeWidth=".35" />)}
      {flat('mets').map(({ p, k }, i) => <Metabolite key={i} cx={p[0]} cy={p[1]} r={k === 'P' ? 3.8 : 2.05} />)}
      {flat('mets').map(({ q, name }, i) => <MetLabel key={i} x={q[0]} y={q[1] + 1.1}>{name}</MetLabel>)}
    </MapSvg>
  );
}

/* ---------- icons ---------- */
const Svg = ({ w = 16, h = w, box = `0 0 ${w} ${h}`, children, ...r }) => <svg width={w} height={h} viewBox={box} fill="none" stroke="currentColor" {...r}>{children}</svg>;

const CentOS = () => (
  <Svg w={17} box="0 0 16 16" stroke="none">
    <path d="M8 0l3 3-3 4-3-4z" fill="#e5a92e" /><path d="M16 8l-3 3-4-3 4-3z" fill="#3c3a82" />
    <path d="M8 16l-3-3 3-4 3 4z" fill="#8aba3a" /><path d="M0 8l3-3 4 3-4 3z" fill="#a3297d" />
    <path d="M2.500 2.500h4v4zM13.500 13.500h-4v-4z" fill="#b8479a" /><path d="M13.500 2.500v4h-4z" fill="#e9b84b" /><path d="M2.500 13.500v-4h4z" fill="#4c4a9c" />
  </Svg>
);
const Favicon = () => (
  <Svg w={14} h={18} strokeWidth="1.1">
    <path d="M4 12l-1 5M7 11v6M10 12l2 5" stroke="#ccc8ce" strokeWidth="1" />
    <ellipse cx="6.500" cy="7" rx="4.500" ry="4" stroke="#d68fb4" /><path d="M9.500 2.500L4.500 11" stroke="#cc5f6b" /><path d="M3 5q5 0 7 4" stroke="#b891d2" /><path d="M9 3l3-1M3 9l-2 1" stroke="#e0a0a0" />
  </Svg>
);
const Cross = ({ s = 9, sw = 1.8 }) => <Svg w={s} box="0 0 10 10" strokeWidth={sw}><path d="M1 1l8 8M9 1L1 9" /></Svg>;
const Search = ({ minus }) => (
  <Svg w={24} stroke="#fff"><circle cx="10" cy="10" r="7.700" strokeWidth="3" /><path d="M16 16l5.500 5.500" strokeWidth="4" strokeLinecap="round" /><path d={minus ? 'M6 10h8' : 'M6 10h8M10 6v8'} strokeWidth="2" /></Svg>
);
const Terminal = () => (
  <Svg w={22} stroke="none"><rect width="22" height="22" rx="1" fill="#c9c9c7" /><rect x="1.500" y="2" width="19" height="18" fill="#2b3030" /><path d="M3 5l2.500 1.500L3 8M7 9h3" stroke="#e4e8e4" strokeWidth="1" /><path d="M2 12h18M2 15h18M2 18h18" stroke="#454c4a" /></Svg>
);
const Editor = () => (
  <Svg w={24} stroke="none"><path d="M1 2h17v20H1z" fill="#eef0f4" stroke="#9aa" strokeWidth=".8" /><path d="M4 6h10M4 9h11M4 12h8M4 15h9M4 18h6" stroke="#8b95a3" strokeWidth="1" /><path d="M10 20l2-5 9-9 2.500 2.500-9 9z" fill="#f0a030" stroke="#a55c12" strokeWidth=".7" /><path d="M20 6.500l1.500-1.500 2.500 2.500-1.500 1.500z" fill="#d33" /></Svg>
);
const Cabinet = () => (
  <Svg w={20} h={22} stroke="none"><path d="M2 1h16l1 3v17H1V4z" fill="#3c73bd" stroke="#25508f" /><rect x="3" y="5" width="14" height="6.500" fill="#6fa1e0" stroke="#2a5aa0" /><rect x="3" y="13" width="14" height="6.500" fill="#6fa1e0" stroke="#2a5aa0" /><path d="M7 7.500h6v2H7zM7 15.500h6v2H7z" fill="#eef3fa" stroke="#345" strokeWidth=".6" /></Svg>
);
const Firefox = () => (
  <Svg w={24} stroke="none">
    <defs><linearGradient id="ff" x1=".8" y1=".1" x2=".3" y2="1"><stop stopColor="#ffe14a" /><stop offset=".45" stopColor="#ff8a1f" /><stop offset="1" stopColor="#f0196b" /></linearGradient></defs>
    <path d="M14 0c3 2 4 4 5 6 3 2 4.500 5 4 8-.6 5.500-5 9.500-11 9.500S1 19 1 13c0-3 1-5.500 3-7.500L5 3l3 3c2-1 4-.5 5-2 .6-1.300.8-2.600 1-4z" fill="url(#ff)" />
    <circle cx="12" cy="13" r="5.200" fill="#7542e5" /><path d="M5 9c3-1 4 0 7 1-1 2-3 2-4 3 0 3 3 4 6 3-2 4-9 3-10-2z" fill="#ff9a22" />
  </Svg>
);

const TASKS = [
  [Terminal, '[tamura@h169:~]', 1],
  [Terminal, <>[tamura@h169:~/project/tri<em>⋯</em></>, 1],
  [Terminal, '[tamura@h169:~/project]', 1],
  [Editor, <>MATLAB R2021a - academic <em>⋯</em></>, 0],
  [Firefox, 'Escher — Mozilla Firefox', 0, 1],
  [Cabinet, '[ダウンロード]', 1],
  [Terminal, <>[tamura@h169:~/ダウンロー<em>⋯</em></>, 1],
  [Editor, <>エディター&nbsp; -&nbsp; /home/tamur<em>⋯</em></>, 0],
  [Cabinet, '画像', 0],
  [Terminal, 'tamura@h169:~/画像', 0],
];

export default function App() {
  return (
    <Desktop>
      <Global />
      <TopPanel>
        <CentOS />
        <PanelItem $gap={7} $ls={0.3}>アプリケーション</PanelItem>
        <PanelItem $gap={23}>場所</PanelItem>
        <PanelItem $gap={23}>Firefox</PanelItem>
        <Spacer />
        <Svg w={17}><circle cx="8" cy="8" r="7" stroke="#8a8a86" fill="#dcdcd8" /><path d="M4 3l5 6" stroke="#d22" strokeWidth="2.500" /><rect x="8" y="8" width="8" height="8" rx="1" fill="#555" stroke="none" /><path d="M10 10l4 4M14 10l-4 4" stroke="#fff" /></Svg>
        <PanelItem $gap={18}>ja</PanelItem>
        <PanelItem $gap={20}>水曜日 16：59</PanelItem>
        <PanelIcon $gap={20}><Svg w={16} stroke="none" fill="#2e3436"><path d="M5.500 0h5v5h-5zM0 11h5v5H0zM11 11h5v5h-5zM7.300 5h1.400v3H14v3h-1.400V9.300H3.400V11H2V8h5.300z" /></Svg></PanelIcon>
        <PanelIcon $gap={12}><Svg w={17} strokeWidth="1.600"><path d="M0 5.500h3L7 2v12L3 10.500H0z" fill="#2e3436" stroke="none" /><path d="M9 5.500q2 2.500 0 5M11.300 3.500q3.500 4.500 0 9M13.500 1.500q4.500 6.500 0 13" /></Svg></PanelIcon>
        <PanelIcon $gap={12}><Svg w={15} strokeWidth="2"><path d="M4.500 3.200a6 6 0 1 0 6 0M7.500 0v7" /></Svg></PanelIcon>
      </TopPanel>
      <TitleBar>
        <Title>Escher — Mozilla Firefox</Title>
        <WindowButtons>
          <Svg w={9} strokeWidth="2"><path d="M0 7.500h9" /></Svg>
          <Svg w={16} h={9} strokeWidth="2"><path d="M6 2.500h4.500v4.500h-4.500z" /></Svg>
          <Cross s={10} sw={2.4} />
        </WindowButtons>
      </TitleBar>
      <TabStrip>
        {[0, 1, 2, 3].map(i => (
          <Tab key={i} $active={i === 1} $line={i > 1}>
            <Favicon /><TabLabel>Escher</TabLabel><Cross s={12} sw={1.4} />
          </Tab>
        ))}
        <NewTab><Svg w={15} strokeWidth="1.800"><path d="M7.500 0v15M0 7.500h15" /></Svg></NewTab>
      </TabStrip>
      <NavBar>
        <BackButton><Svg w={16} stroke="#a9abab" strokeWidth="2"><path d="M15 8H2M8 2L2 8l6 6" /></Svg></BackButton>
        <NavIcon><Svg w={16} stroke="#a9abab" strokeWidth="2"><path d="M1 8h13M8 2l6 6-6 6" /></Svg></NavIcon>
        <NavIcon><Svg w={16} strokeWidth="2"><path d="M13.500 10.500a6 6 0 1 1-1.500-7" /><path d="M15 0v6.500H8.500z" fill="currentColor" stroke="none" /></Svg></NavIcon>
        <NavIcon><Svg w={16} strokeWidth="2"><path d="M1 8.500L8 1.500l7 7M3.500 7v8h9V7" /><path d="M7 10h2v5H7z" strokeWidth="1" fill="currentColor" /></Svg></NavIcon>
        <UrlBar>
          <NavIcon $w={20}><Svg w={14} strokeWidth="1.900"><path d="M7 1.200l5.500 1.300v4Q12.500 11 7 13.400 1.500 11 1.500 6.500v-4z" /><path d="M7 4v6" strokeWidth="2" /></Svg></NavIcon>
          <UrlDivider />
          <NavIcon $w={26}><Svg w={14}><rect x="1" y="6" width="12" height="8" rx="1.500" fill="currentColor" stroke="none" /><path d="M3.700 7V4.200a3.300 3.300 0 0 1 6.600 0V7" strokeWidth="2" /></Svg></NavIcon>
          <UrlText>https://<b>escher.github.io</b>/#/app?map=e_coli_core.Core metabolism&amp;tool=Builder&amp;model=e_coli_core</UrlText>
          <NavIcon $w={28}><Svg w={16} h={4} stroke="none" fill="currentColor"><circle cx="2" cy="2" r="2" /><circle cx="8" cy="2" r="2" /><circle cx="14" cy="2" r="2" /></Svg></NavIcon>
          <NavIcon $w={28}><Svg w={16} strokeWidth="1.800"><path d="M1 2h14v5a7 7 0 0 1-14 0z" strokeLinejoin="round" /><path d="M4.500 6L8 9.500 11.500 6" /></Svg></NavIcon>
          <NavIcon $w={28}><Svg w={17} box="0 0 16 16" strokeWidth="1.700"><path d="M8 1.500l2 4.300 4.700.6-3.400 3.200.9 4.700L8 12l-4.200 2.300.9-4.700L1.300 6.400 6 5.800z" strokeLinejoin="round" /></Svg></NavIcon>
        </UrlBar>
        <NavRight>
          <NavIcon><Svg w={14} h={16} strokeWidth="2"><path d="M7 0v11M2 6l5 5 5-5M1 15h12" /></Svg></NavIcon>
          <NavIcon><Svg w={16} strokeWidth="2"><path d="M1.500 1v14M5 1v14M8.500 1v14M10.500 2l4.500 13" /></Svg></NavIcon>
          <NavIcon><Svg w={16} strokeWidth="2"><rect x="1" y="2" width="14" height="12.500" rx="1.500" /><path d="M7.500 2v12" strokeWidth="1.500" /><path d="M3 5h3M3 7.500h3M3 10h3" strokeWidth="1" /></Svg></NavIcon>
          <NavIcon><Svg w={16}><circle cx="8" cy="8" r="7" strokeWidth="1.500" /><circle cx="8" cy="6" r="3" fill="currentColor" stroke="none" /><path d="M3.500 12q1-3 4.500-3t4.500 3Q8 16 3.500 12z" fill="currentColor" stroke="none" /></Svg></NavIcon>
          <MenuButton><Svg w={14} h={14} strokeWidth="2"><path d="M0 2h14M0 7h14M0 12h14" /></Svg></MenuButton>
        </NavRight>
      </NavBar>
      <Page>
        <MenuBar>
          {['Map', 'Model', 'Data', 'Edit', 'View'].map(m => <MenuItem key={m}>{m}<Caret /></MenuItem>)}
          <Help>?</Help>
        </MenuBar>
        <Workspace>
          <Tools>
            <ToolButton><Search /></ToolButton>
            <ToolButton><Search minus /></ToolButton>
            <ToolButton><Svg w={22} stroke="#fff" strokeWidth="4"><path d="M4 18l5-5M13 9l5-5" /><path d="M1 11.500V21h9.500zM11.500 1H21v9.500z" fill="#fff" stroke="none" /></Svg></ToolButton>
            <ToolGroup>
              <Tool $active><Svg w={24} stroke="#fff" strokeWidth="3"><path d="M12 3v18M3 12h18" /><path d="M12 0l4.500 5h-9zM12 24l4.500-5h-9zM0 12l5-4.500v9zM24 12l-5-4.500v9z" fill="#fff" stroke="none" /></Svg></Tool>
              <Tool><Svg w={18} h={24} stroke="none"><path d="M2 0v20l4.500-4.200 4 8 4-2-3.800-7.300H17z" fill="#fff" /></Svg></Tool>
              <Tool><Svg w={24} stroke="none"><path d="M23 6.500a6.500 6.500 0 0 1-9 5.500L5 21.500a2.500 2.500 0 0 1-4-4L11 9a6.500 6.500 0 0 1 8-8l-4 3.500.5 3.500 4 .8z" fill="#fff" /></Svg></Tool>
              <Tool><Svg w={22} stroke="#fff" strokeWidth="4"><path d="M17.500 17a8.300 8.300 0 1 1 .2-12" /><path d="M21.500 0v9h-9z" fill="#fff" stroke="none" /></Svg></Tool>
              <Tool><ToolText>A</ToolText></Tool>
            </ToolGroup>
          </Tools>
          <Canvas><MetabolicMap /></Canvas>
        </Workspace>
      </Page>
      <TaskBar>
        <ShowDesktop><Svg w={15} strokeWidth="2.400"><path d="M6 1.500h7.500V9H6zM4 6H1.500v7.500H9V12" /></Svg></ShowDesktop>
        <Tasks>
          {TASKS.map(([Icon, text, dim, active], i) => (
            <Task key={i} $dim={dim} $active={active}><Icon /><TaskText>{text}</TaskText></Task>
          ))}
        </Tasks>
        <Workspaces>
          <WorkspaceCell $active /><WorkspaceCell /><WorkspaceCell /><WorkspaceCell $last />
        </Workspaces>
      </TaskBar>
    </Desktop>
  );
}
